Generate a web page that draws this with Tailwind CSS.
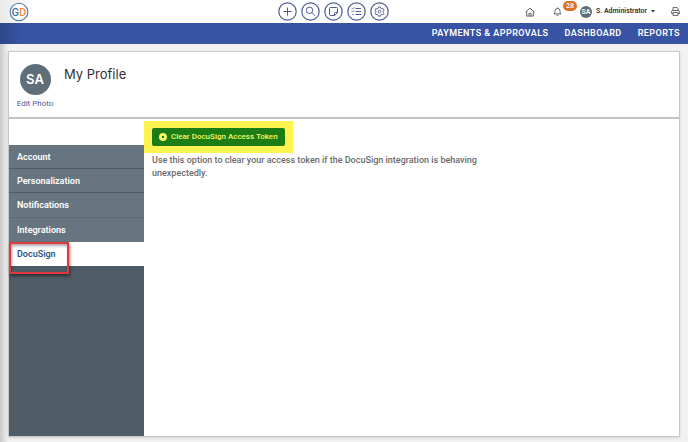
<!DOCTYPE html>
<html lang="en">
<head>
    <meta charset="UTF-8">
    <meta name="viewport" content="width=device-width, initial-scale=1.0">
    <title>My Profile</title>
    <script src="https://cdn.jsdelivr.net/npm/@tailwindcss/browser@4"></script>
</head>
<body class="min-h-screen flex flex-col bg-[#f2f2f2] font-['Roboto',sans-serif] text-[#333]">
    <!-- Top bar -->
    <header class="grid grid-cols-[1fr_auto_1fr] items-center h-[23px] pl-[9px] pr-2 bg-linear-to-r from-[#e9e9e9] to-white to-5%">
        <a href="#" aria-label="Home page">
            <svg class="size-5" viewBox="0 0 20 20">
                <circle cx="10" cy="10" r="8.8" fill="#fff" stroke="#4a7ba6" stroke-width="1.1"/>
                <text x="2.6" y="13.6" font-family="Roboto, sans-serif" font-size="11" font-weight="500" fill="#3b6f9e">G</text>
                <text x="10" y="13.6" font-family="Roboto, sans-serif" font-size="11" font-weight="500" fill="#f08a3c">D</text>
            </svg>
        </a>
        <div class="flex gap-1 mr-[22px] text-[#4d5990]">
            <button type="button" aria-label="Add" class="size-[19px]">
                <svg viewBox="0 0 19 19" fill="none" stroke="currentColor"><circle cx="9.5" cy="9.5" r="8.7" stroke-width="1.2"/><path d="M9.5 5.5v8M5.5 9.5h8"/></svg>
            </button>
            <button type="button" aria-label="Search" class="size-[19px]">
                <svg viewBox="0 0 19 19" fill="none" stroke="currentColor"><circle cx="9.5" cy="9.5" r="8.7" stroke-width="1.2"/><circle cx="8.5" cy="8.3" r="3.2"/><path d="M10.9 10.7l3.2 3.2"/></svg>
            </button>
            <button type="button" aria-label="Notes" class="size-[19px]">
                <svg viewBox="0 0 19 19" fill="none" stroke="currentColor"><circle cx="9.5" cy="9.5" r="8.7" stroke-width="1.2"/><path d="M6.5 5.5h6q1 0 1 1v4.2l-2.8 2.8H6.5q-1 0-1-1v-6q0-1 1-1zM13.5 10.5h-2q-1 0-1 1v2"/></svg>
            </button>
            <button type="button" aria-label="Tasks" class="size-[19px]">
                <svg viewBox="0 0 19 19" fill="none" stroke="currentColor"><circle cx="9.5" cy="9.5" r="8.7" stroke-width="1.2"/><path d="M8.5 6.5H14M8.5 9.5H14M8.5 12.5H14"/><path d="M4.8 6.3l.8.8 1.5-1.7M4.8 9.3l.8.8 1.5-1.7M5.2 12.5h1.5" stroke-width=".9"/></svg>
            </button>
            <button type="button" aria-label="Settings" class="size-[19px]">
                <svg viewBox="0 0 19 19" fill="none" stroke="currentColor"><circle cx="9.5" cy="9.5" r="8.7" stroke-width="1.2"/><path d="M8.6 5h1.8l.4 1.3 1.1.6 1.3-.3.9 1.5-.9 1v1.1l.9 1-.9 1.5-1.3-.3-1.1.6-.4 1.2H8.6l-.4-1.2-1.1-.6-1.3.3-.9-1.5.9-1V9.1l-.9-1 .9-1.5 1.3.3 1.1-.6z" stroke-width=".9"/><circle cx="9.5" cy="9.6" r="1.4" stroke-width=".9"/></svg>
            </button>
        </div>
        <div class="flex items-center justify-end text-[#555]">
            <a href="#" aria-label="Home" class="mr-[18px]">
                <svg class="size-[10px]" viewBox="0 0 10 10" fill="none" stroke="currentColor" stroke-width=".9" stroke-linejoin="round"><path d="M.6 5L5 1.2 9.4 5M1.7 4.2v4.9h6.6V4.2M4 9V6.2h2V9"/></svg>
            </a>
            <button type="button" aria-label="Notifications" class="relative mr-[18px]">
                <svg class="size-[9px]" viewBox="0 0 9 9" fill="none" stroke="currentColor" stroke-width=".9" stroke-linejoin="round"><path d="M1 6.9c1-1 1-1.7 1-3a2.5 2.5 0 0 1 5 0c0 1.3 0 2 1 3zM4.5.4v1M3.5 8.2h2"/></svg>
                <span class="absolute -top-1.5 left-[10px] w-[14px] h-[10px] rounded-full bg-[#dd7227] text-white text-[7px] leading-[10px] font-medium text-center">28</span>
            </button>
            <button type="button" class="flex items-center gap-1 text-[7px] font-semibold text-[#333]">
                <span class="size-3 rounded-full bg-[#5f6f79] text-white text-[7px] leading-3 text-center">SA</span>
                <span>S. Administrator</span>
                <svg class="w-1 h-[3px]" viewBox="0 0 4 3" fill="currentColor"><path d="M0 0h4L2 2.5z"/></svg>
            </button>
            <button type="button" aria-label="Print" class="ml-4">
                <svg class="size-[9px]" viewBox="0 0 9 9" fill="none" stroke="currentColor" stroke-width=".9" stroke-linejoin="round"><path d="M2 3.5V.6h4.3l.7.7v2.2M2 6.5H.6V4.5q0-1 1-1h5.8q1 0 1 1v2H7M2 5.5h5v2.9H2z"/></svg>
            </button>
        </div>
    </header>

    <nav class="flex items-center justify-end gap-4 h-[21px] px-2 bg-linear-to-r from-[#2f4789] to-[#3852a4] to-3% text-white text-[9px] font-semibold tracking-wider">
        <a href="#">PAYMENTS &amp; APPROVALS</a>
        <a href="#">DASHBOARD</a>
        <a href="#">REPORTS</a>
    </nav>

    <main class="flex-1 flex flex-col px-2 pt-[7px] pb-[5px] bg-linear-to-r from-[#c9c9c9] to-[#f2f2f2] to-[8px]">
        <div class="flex-1 flex flex-col bg-white border border-[#c8c8c8] shadow-sm">
            <div class="flex items-start h-[67px] pt-3 px-2 border-b-2 border-[#c3c3c8]">
                <div class="flex flex-col items-center gap-1 w-9">
                    <div class="size-[31px] rounded-full bg-[#5f6f79] text-white font-['Inter',sans-serif] text-[13px] leading-[31px] font-semibold text-center">SA</div>
                    <a href="#" class="text-[8px] leading-[10px] whitespace-nowrap text-[#4b5c94]">Edit Photo</a>
                </div>
                <h1 class="ml-[11px] font-['Inter',sans-serif] text-[13px] leading-5">My Profile</h1>
            </div>

            <div class="flex-1 flex">
                <aside class="w-[135px] shrink-0 flex flex-col pt-[26px]">
                    <ul class="bg-[#66757f] text-white text-[9px] leading-6 font-semibold">
                        <li class="border-b border-[#505c65]"><a href="#" class="block h-[23px] px-2">Account</a></li>
                        <li class="border-b border-[#505c65]"><a href="#" class="block h-[23px] px-2">Personalization</a></li>
                        <li class="border-b border-[#5d6b75]"><a href="#" class="block h-6 px-2">Notifications</a></li>
                        <li><a href="#" class="block h-6 px-2">Integrations</a></li>
                        <li class="relative bg-white text-[#2a5788]">
                            <a href="#" class="block h-6 px-2">DocuSign</a>
                            <!-- callout around the selected item -->
                            <span class="absolute left-0 top-0 w-[60px] h-8 border-2 border-[#e0393e] shadow-[1px_2px_3px_rgba(0,0,0,0.5),inset_1px_2px_3px_rgba(0,0,0,0.35)]"></span>
                        </li>
                    </ul>
                    <div class="flex-1 bg-[#505c65]"></div>
                </aside>

                <section class="flex-1 pt-0.5 text-[9px]">
                    <div class="inline-block py-[7px] px-2 bg-[#fff350]">
                        <button type="button" class="flex items-center gap-1 h-[18px] px-[7px] rounded-xs bg-[#1b7d14] text-[#f6f76a] text-[8px] font-medium">
                            <svg class="size-2" viewBox="0 0 8 8"><circle cx="4" cy="4" r="4" fill="currentColor"/><path d="M3 3l2 2M5 3L3 5" stroke="#1b7d14" stroke-width="1"/></svg>
                            Clear DocuSign Access Token
                        </button>
                    </div>
                    <p class="max-w-[360px] mt-px px-2 text-[#6b6b6b] leading-[13px] font-medium">Use this option to clear your access token if the DocuSign integration is behaving unexpectedly.</p>
                </section>
            </div>
        </div>
    </main>
</body>
</html>
